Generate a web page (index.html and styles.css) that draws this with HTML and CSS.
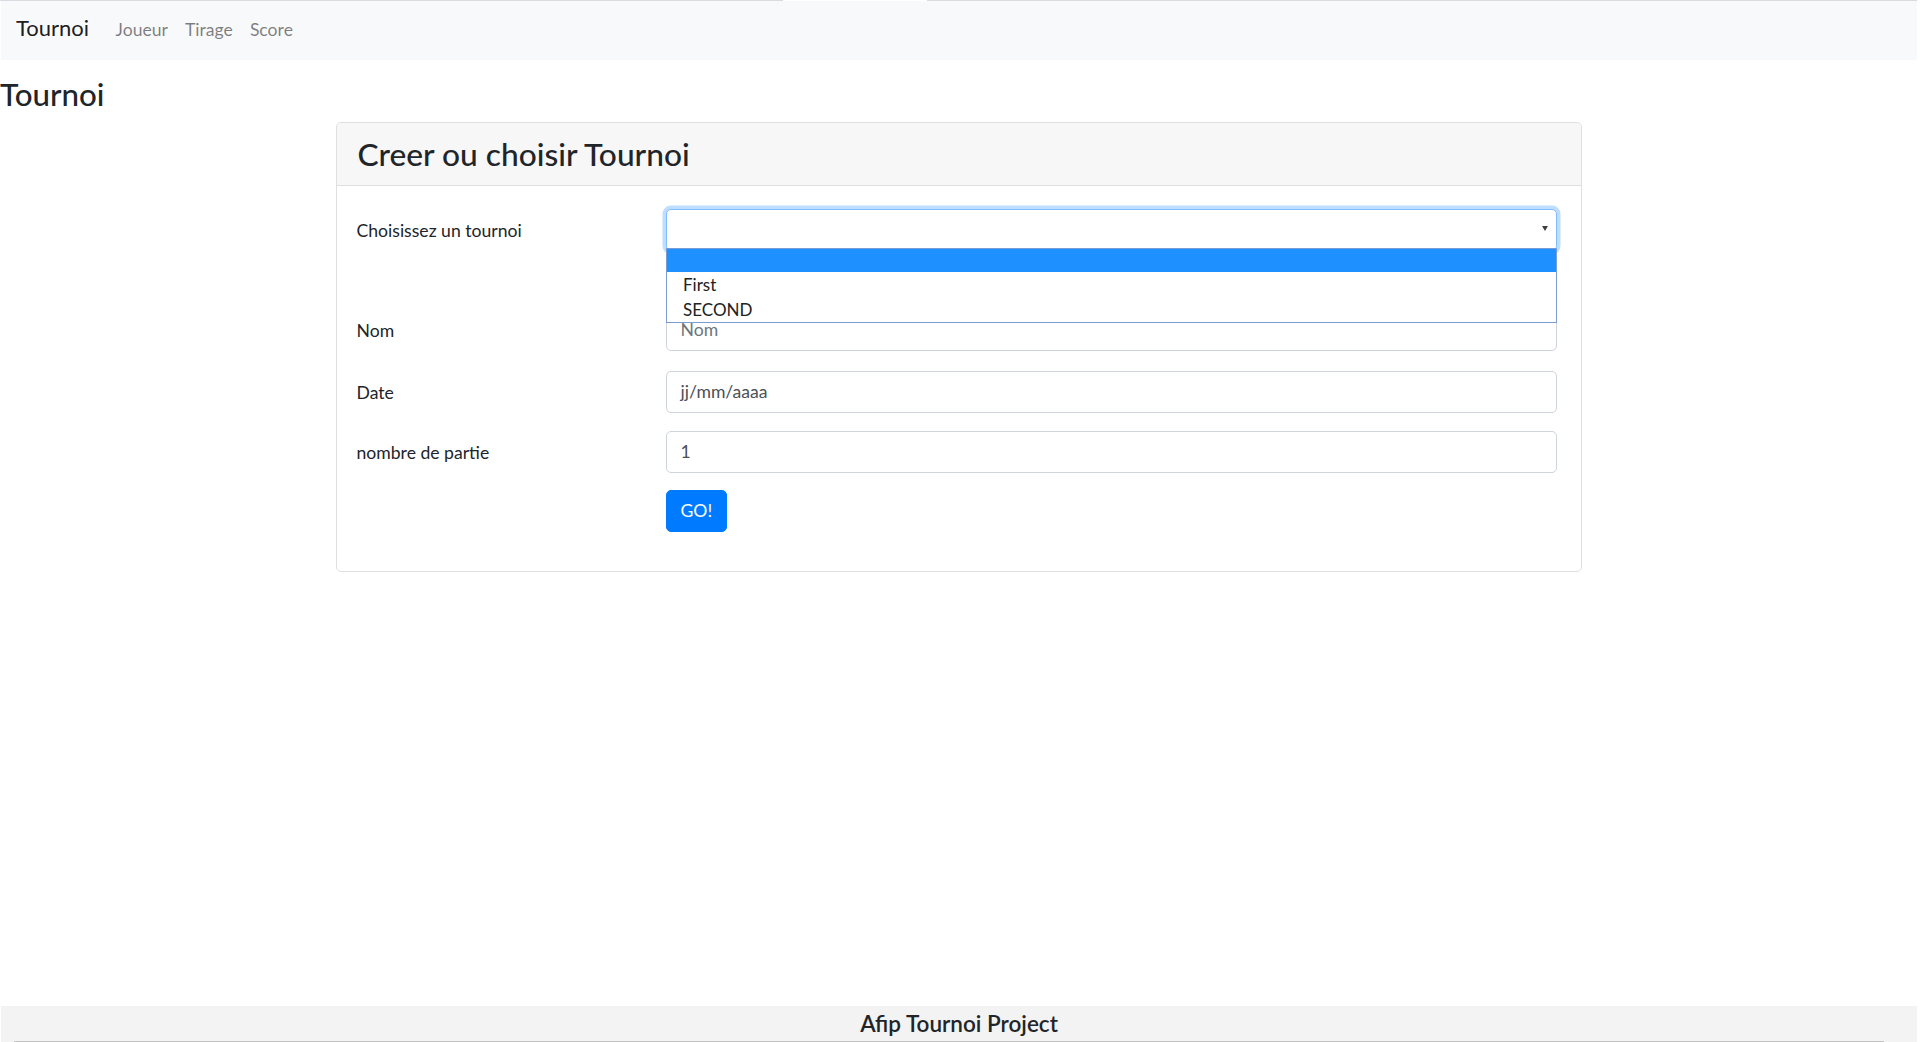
FILE: index.html
```html
<!DOCTYPE html>
<html lang="fr">
<head>
<meta charset="utf-8">
<title>Tournoi</title>
<link rel="stylesheet" href="styles.css">
</head>
<body>
<div class="topline"></div>
<nav class="navbar">
  <a class="brand" href="#">Tournoi</a>
  <ul class="nav">
    <li><a href="#">Joueur</a></li>
    <li><a href="#">Tirage</a></li>
    <li><a href="#">Score</a></li>
  </ul>
</nav>
<main class="main">
  <h1 class="page-title">Tournoi</h1>
  <section class="card">
    <div class="card-header">
      <h3 class="card-title">Creer ou choisir Tournoi</h3>
    </div>
    <form class="card-body">
      <div class="row row-select">
        <label class="label">Choisissez un tournoi</label>
        <div class="select-wrap">
          <div class="select"><span class="arrow"></span></div>
          <ul class="dropdown">
            <li class="opt active">&nbsp;</li>
            <li class="opt">First</li>
            <li class="opt">SECOND</li>
          </ul>
        </div>
      </div>
      <div class="row row-nom">
        <label class="label">Nom</label>
        <div class="input placeholder">Nom</div>
      </div>
      <div class="row row-date">
        <label class="label">Date</label>
        <div class="input">jj/mm/aaaa</div>
      </div>
      <div class="row row-nb">
        <label class="label">nombre de partie</label>
        <div class="input">1</div>
      </div>
      <div class="row row-last">
        <span></span>
        <div><button type="button" class="btn">GO!</button></div>
      </div>
    </form>
  </section>
</main>
<footer class="footer">
  <div class="footer-text">Afip Tournoi Project</div>
  <div class="footer-line"></div>
</footer>
</body>
</html>
```
FILE: styles.css
```css
* { box-sizing: border-box; }
html, body { margin: 0; padding: 0; }
body {
  font-family: "Lato", "Noto Sans", sans-serif;
  font-size: 17.6px;
  line-height: 1.5;
  color: #212529;
  background: #fff;
  min-height: 100vh;
  display: flex;
  flex-direction: column;
  padding-right: 3px;
}
.topline {
  height: 1px;
  background: linear-gradient(to right, #d8dbe0 0, #d8dbe0 783px, #fff 783px, #fff 927px, #d8dbe0 927px);
}
.navbar {
  margin-left: 1px;
  height: 59px;
  background: #f8f9fa;
  display: flex;
  align-items: baseline;
  padding: 12px 0 0 15px;
}
.brand {
  font-size: 22px;
  line-height: 30px;
  color: rgba(0,0,0,.9);
  text-decoration: none;
  margin-right: 18px;
}
.nav { list-style: none; margin: 0; padding: 0; display: flex; }
.nav a {
  display: block;
  padding: 0 8.5px;
  line-height: 30px;
  color: rgba(0,0,0,.5);
  text-decoration: none;
}
.main { display: flex; flex-direction: column; }
.page-title {
  font-size: 31.3px;
  font-weight: 500;
  line-height: 1.2;
  margin: 16px 0 8.5px 0;
}
.card {
  width: 1246px;
  align-self: center;
  border: 1px solid #dfdfdf;
  border-radius: 5px;
  background: #fff;
}
.card-header {
  background: #f7f7f7;
  border-bottom: 1px solid #dfdfdf;
  padding: 12px 21px 12px;
  border-radius: 5px 5px 0 0;
}
.card-title {
  margin: 0;
  font-size: 31.7px;
  font-weight: 500;
  line-height: 1.2;
}
.card-body { padding: 23px 24px 39px 20px; }
.row {
  display: grid;
  grid-template-columns: 279px 1fr;
  column-gap: 30px;
}
.row-select { margin-bottom: 58px; }
.row-nom { margin-bottom: 20px; }
.row-date { margin-bottom: 18px; }
.row-nb { margin-bottom: 17px; }
.row-last { margin-bottom: 0; }
.label { padding-top: 7px; line-height: 29.4px; }
.select-wrap { position: relative; }
.select {
  height: 42px;
  border: 1px solid #80bdff;
  border-radius: 5px;
  box-shadow: 0 0 0 3.5px rgba(0,123,255,.25);
  background: #fff;
  position: relative;
}
.arrow {
  position: absolute;
  right: 8px;
  top: 16px;
  width: 0; height: 0;
  border-left: 3px solid transparent;
  border-right: 3px solid transparent;
  border-top: 5px solid #404040;
}
.dropdown {
  position: absolute;
  left: 0; right: 0;
  top: 39px;
  margin: 0;
  padding: 0;
  list-style: none;
  background: #fff;
  border: 1px solid #7a9cd3;
  z-index: 5;
}
.opt {
  font-size: 17px;
  line-height: 25px;
  padding-left: 16.5px;
  color: #222;
}
.opt.active { background: #1e90ff; height: 23px; }
.input {
  height: 42px;
  border: 1px solid #ced4da;
  border-radius: 5px;
  padding: 0 14px;
  line-height: 40px;
  color: #495057;
}
.input.placeholder { color: #6c757d; }
.btn {
  height: 42px;
  padding: 0 14px;
  background: #007bff;
  color: #fff;
  border: 1px solid #007bff;
  border-radius: 5px;
  font-family: inherit;
  font-size: 17.6px;
  line-height: 40px;
}
.footer {
  margin-top: auto;
  margin-left: 1px;
  height: 36px;
  background: #f3f3f3;
  display: flex;
  flex-direction: column;
}
.footer-text {
  text-align: center;
  font-size: 22.5px;
  font-weight: 600;
  line-height: 35px;
  color: #212529;
}
.footer-line {
  height: 1px;
  margin: 0 33px 0 13px;
  background: #c4c4c4;
}
```
